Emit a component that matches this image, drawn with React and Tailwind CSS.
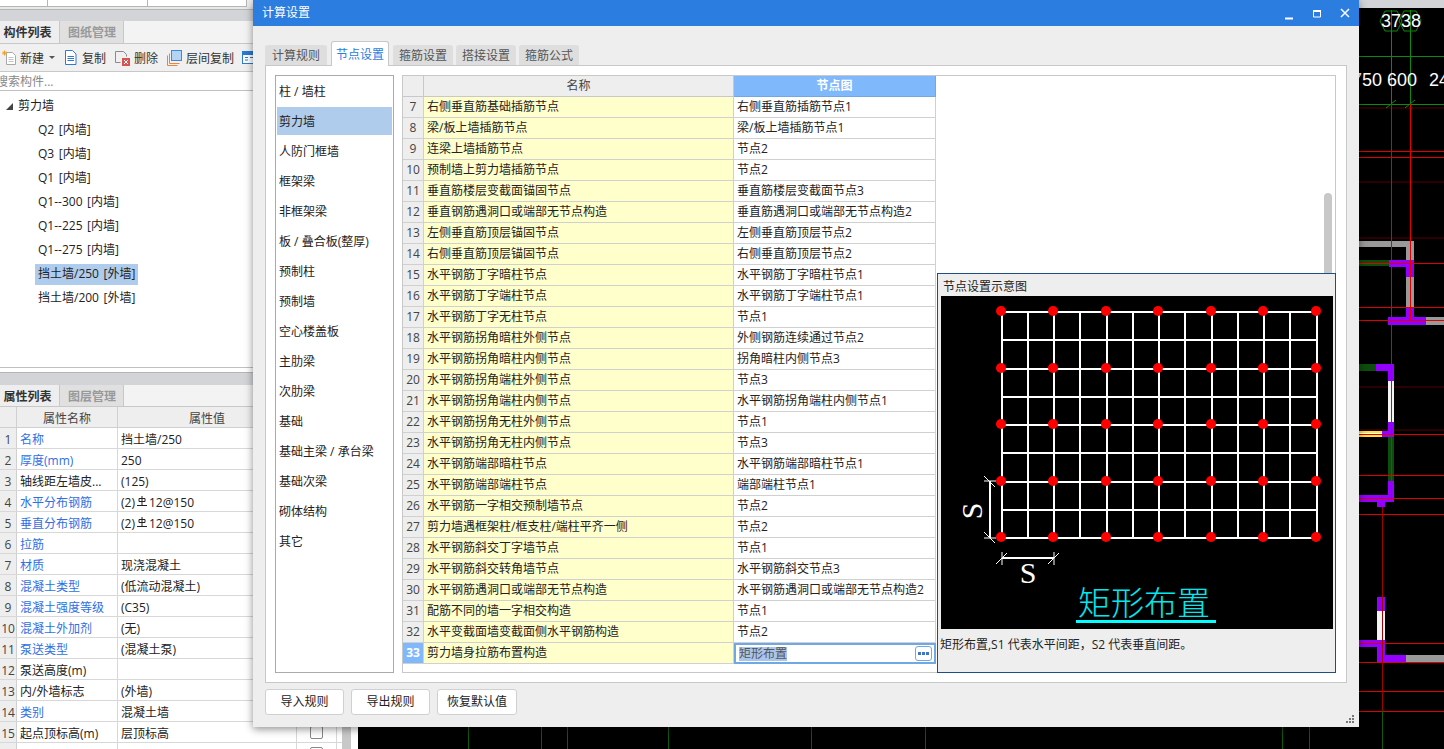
const treeItems = ['Q2 [内墙]', 'Q3 [内墙]', 'Q1 [内墙]', 'Q1--300 [内墙]', 'Q1--225 [内墙]', 'Q1--275 [内墙]', '挡土墙/250 [外墙]', '挡土墙/200 [外墙]'];

const props = [
  ['名称', '挡土墙/250', true],
  ['厚度(mm)', '250', true],
  ['轴线距左墙皮...', '(125)', false],
  ['水平分布钢筋', 'rebar', true],
  ['垂直分布钢筋', 'rebar', true],
  ['拉筋', '', true],
  ['材质', '现浇混凝土', true],
  ['混凝土类型', '(低流动混凝土)', true],
  ['混凝土强度等级', '(C35)', true],
  ['混凝土外加剂', '(无)', true],
  ['泵送类型', '(混凝土泵)', true],
  ['泵送高度(m)', '', false],
  ['内/外墙标志', '(外墙)', false],
  ['类别', '混凝土墙', true],
  ['起点顶标高(m)', '层顶标高', false],
  ['', '', false],
];

const categories = ['柱 / 墙柱', '剪力墙', '人防门框墙', '框架梁', '非框架梁', '板 / 叠合板(整厚)', '预制柱', '预制墙', '空心楼盖板', '主肋梁', '次肋梁', '基础', '基础主梁 / 承台梁', '基础次梁', '砌体结构', '其它'];

const nodes = [
  [7, '右侧垂直筋基础插筋节点', '右侧垂直筋插筋节点1'],
  [8, '梁/板上墙插筋节点', '梁/板上墙插筋节点1'],
  [9, '连梁上墙插筋节点', '节点2'],
  [10, '预制墙上剪力墙插筋节点', '节点2'],
  [11, '垂直筋楼层变截面锚固节点', '垂直筋楼层变截面节点3'],
  [12, '垂直钢筋遇洞口或端部无节点构造', '垂直筋遇洞口或端部无节点构造2'],
  [13, '左侧垂直筋顶层锚固节点', '左侧垂直筋顶层节点2'],
  [14, '右侧垂直筋顶层锚固节点', '右侧垂直筋顶层节点2'],
  [15, '水平钢筋丁字暗柱节点', '水平钢筋丁字暗柱节点1'],
  [16, '水平钢筋丁字端柱节点', '水平钢筋丁字端柱节点1'],
  [17, '水平钢筋丁字无柱节点', '节点1'],
  [18, '水平钢筋拐角暗柱外侧节点', '外侧钢筋连续通过节点2'],
  [19, '水平钢筋拐角暗柱内侧节点', '拐角暗柱内侧节点3'],
  [20, '水平钢筋拐角端柱外侧节点', '节点3'],
  [21, '水平钢筋拐角端柱内侧节点', '水平钢筋拐角端柱内侧节点1'],
  [22, '水平钢筋拐角无柱外侧节点', '节点1'],
  [23, '水平钢筋拐角无柱内侧节点', '节点3'],
  [24, '水平钢筋端部暗柱节点', '水平钢筋端部暗柱节点1'],
  [25, '水平钢筋端部端柱节点', '端部端柱节点1'],
  [26, '水平钢筋一字相交预制墙节点', '节点2'],
  [27, '剪力墙遇框架柱/框支柱/端柱平齐一侧', '节点2'],
  [28, '水平钢筋斜交丁字墙节点', '节点1'],
  [29, '水平钢筋斜交转角墙节点', '水平钢筋斜交节点3'],
  [30, '水平钢筋遇洞口或端部无节点构造', '水平钢筋遇洞口或端部无节点构造2'],
  [31, '配筋不同的墙一字相交构造', '节点1'],
  [32, '水平变截面墙变截面侧水平钢筋构造', '节点2'],
  [33, '剪力墙身拉筋布置构造', '矩形布置'],
];

// x, y, w, h, fill: wall pieces on the CAD canvas
const walls = [
  [1359, 241, 55, 6, '#999999'], [1406, 241, 8, 70, '#999999'], [1359, 260, 30, 6, '#0d4d0d'],
  [1389, 260, 25, 7, '#9400ff'], [1406, 267, 8, 10, '#9400ff'], [1406, 308, 8, 10, '#9400ff'],
  [1388, 317, 38, 8, '#9400ff'], [1426, 317, 18, 8, '#999999'],
  [1359, 364, 17, 7, '#0d4d0d'], [1376, 364, 18, 7, '#9400ff'], [1388, 364, 6, 17, '#9400ff'],
  [1388, 381, 6, 41, '#f4f4f4'], [1388, 422, 6, 15, '#9400ff'], [1359, 431, 23, 6, '#ffe23a'],
  [1382, 431, 12, 6, '#9400ff'], [1388, 437, 6, 44, '#0d4d0d'], [1388, 481, 6, 21, '#9400ff'],
  [1359, 495, 35, 7, '#9400ff'], [1377, 502, 8, 5, '#9400ff'],
  [1377, 597, 8, 14, '#9400ff'], [1377, 611, 8, 29, '#f4f4f4'], [1359, 640, 26, 7, '#9400ff'],
  [1377, 647, 8, 15, '#9400ff'], [1385, 655, 21, 7, '#9400ff'], [1406, 655, 38, 7, '#999999'],
];

const redLines = [151, 157, 263, 307, 320, 434, 475, 498, 514, 643, 662, 691, 711];
const darkLines = [108, 182, 238, 387, 430];
const bottomGreen = [468, 541, 567, 668, 811, 925, 1282, 1309];

const gridX = [1002, 1028, 1054, 1080, 1107, 1133, 1159, 1185, 1212, 1238, 1264, 1290, 1317];
const gridY = [312, 340, 369, 397, 425, 453, 482, 510, 538];
const dotX = [1001, 1053, 1106, 1158, 1211, 1263, 1316];
const dotY = [311, 368, 424, 481, 537];

function RebarGlyph() {
  return (
    <svg width="10" height="11" viewBox="0 0 10 11" className="mx-[2px] -mt-[4px] inline-block" fill="none" stroke="#222" strokeWidth="1">
      <path d="M5 0v9M2 2.500h6v3H2zM0 9.500h10" />
    </svg>
  );
}

function ToolbarIcons({ type }) {
  if (type === 'new') {
    return (
      <svg width="16" height="16" viewBox="0 0 16 16" fill="none">
        <path d="M4.500 2.500h6l3 3v9h-9z" fill="#fff" stroke="#a8a8a8" />
        <path d="M6.500 7.500h5M6.500 9.500h5M6.500 11.500h5" stroke="#c4c4c4" />
        <path d="M2.500 0.500v5M0 3h5M1 1.500l3 3M4 1.500l-3 3" stroke="#f59a23" />
      </svg>
    );
  }
  if (type === 'copy') {
    return (
      <svg width="13" height="15" viewBox="0 0 13 15" fill="none" stroke="#2b7bd0">
        <path d="M1.500 0.500h7l3.500 3.500v10.500h-10.500z" fill="#fff" />
        <path d="M3.500 6.500h6.500M3.500 8.500h6.500M3.500 10.500h6.500" />
      </svg>
    );
  }
  if (type === 'delete') {
    return (
      <svg width="15" height="16" viewBox="0 0 15 16" fill="none">
        <path d="M0.500 1.500h8l3 3v2M0.500 1.500v11h5" stroke="#8a8a8a" />
        <rect x="7" y="8" width="8" height="8" fill="#d9534f" />
        <path d="M9 10l4 4M13 10l-4 4" stroke="#fff" />
      </svg>
    );
  }
  if (type === 'floor') {
    return (
      <svg width="15" height="16" viewBox="0 0 15 16" fill="none">
        <path d="M0.500 5.500v10h10" stroke="#f0842c" />
        <path d="M2.500 3.500v10h10" stroke="#f0842c" />
        <rect x="4.500" y="0.500" width="10" height="10" fill="#b3d4f5" stroke="#3b8ade" />
      </svg>
    );
  }
  return (
    <svg width="15" height="16" viewBox="0 0 15 16" fill="none">
      <rect x="0.500" y="1.500" width="13" height="12" fill="#fff" stroke="#2b7bd0" />
      <rect x="1" y="2" width="12" height="3" fill="#2b7bd0" />
      <path d="M3 7.500h3M3 10h3M8 7.500h3" stroke="#2b7bd0" />
    </svg>
  );
}

function LeftPanel() {
  return (
    <div className="flex h-full w-[358px] shrink-0 flex-col bg-white">
      <div className="flex h-[7px] shrink-0 bg-[#eeeeee]">
        <div className="w-[48px] border-r border-b border-[#b5b5b5] bg-white" />
        <div className="w-[100px] border-r border-b border-[#b5b5b5] bg-white" />
        <div className="w-[99px] border-r border-b border-[#b5b5b5] bg-white" />
      </div>
      <div className="h-[3px] shrink-0 border-b border-[#b5b5b5] bg-[#e8e8e8]" />
      <div className="h-[11px] shrink-0 bg-[#d3d4d8]" />
      <div className="flex h-[23px] shrink-0 border-b border-[#c8c8c8] bg-[#f3f3f3]">
        <div className="flex w-[59px] items-center justify-center bg-[#eeeeee] pt-[2px] pr-[4px] font-bold text-[#333]">构件列表</div>
        <div className="flex w-[65px] items-center justify-center border-x border-[#c8c8c8] bg-[#e0e0e0] pt-[2px] pl-[1px] font-bold text-[#999]">图纸管理</div>
      </div>
      <div className="flex h-[28px] shrink-0 items-center overflow-hidden border-b border-[#c8c8c8] bg-[#f0f0f0] pl-[2px] text-[#333]">
        <ToolbarIcons type="new" />
        <span className="mt-[2px] ml-[2px]">新建</span>
        <span className="ml-[5px] h-0 w-0 border-x-[3px] border-t-[3px] border-x-transparent border-t-[#555]" />
        <span className="ml-[9px] flex items-center"><ToolbarIcons type="copy" /></span>
        <span className="mt-[2px] ml-[5px]">复制</span>
        <span className="ml-[9px] flex items-center"><ToolbarIcons type="delete" /></span>
        <span className="mt-[2px] ml-[4px]">删除</span>
        <span className="ml-[9px] flex items-center"><ToolbarIcons type="floor" /></span>
        <span className="mt-[2px] ml-[4px] whitespace-nowrap">层间复制</span>
        <span className="ml-[8px] flex shrink-0 items-center"><ToolbarIcons type="table" /></span>
      </div>
      <div className="flex h-[19px] shrink-0 items-center overflow-hidden border-b border-[#c0c0c0] pt-[2px] whitespace-nowrap text-[#888]">
        <span className="-ml-[4px]">搜索构件...</span>
      </div>
      <div className="flex h-[277px] shrink-0 flex-col border-b border-[#c0c0c0] pt-[3px]">
        <div className="flex h-[24px] shrink-0 items-center pl-[6px] text-[#222]">
          <span className="h-0 w-0 border-b-[7px] border-l-[7px] border-b-[#444] border-l-transparent" />
          <span className="ml-[5px]">剪力墙</span>
        </div>
        {treeItems.map((item, i) => (
          <div key={item} className="flex h-[24px] shrink-0 items-center pl-[35px] text-[#222]">
            <span className={`flex h-[21px] items-center px-[3px] [word-spacing:1.5px] ${i === 6 ? 'bg-[#b0ccec]' : ''}`}>{item}</span>
          </div>
        ))}
      </div>
      <div className="h-[4px] shrink-0 bg-white" />
      <div className="h-[13px] shrink-0 border-t border-[#b5b5b5] bg-[#d3d4d8]" />
      <div className="flex h-[22px] shrink-0 border-b border-[#c8c8c8] bg-[#f3f3f3]">
        <div className="flex w-[59px] items-center justify-center bg-[#eeeeee] pt-[2px] pr-[4px] font-bold text-[#333]">属性列表</div>
        <div className="flex w-[65px] items-center justify-center border-x border-[#c8c8c8] bg-[#e0e0e0] pt-[2px] pl-[1px] font-bold text-[#999]">图层管理</div>
      </div>
      <div className="flex min-h-0 flex-1 overflow-hidden">
        <div className="w-[342px] shrink-0">
          <div className="grid h-[21px] grid-cols-[17px_101px_179px_40px] border-b border-[#d0d0d0] bg-[#eeeeee] text-[#444]">
            <div className="border-r border-[#d0d0d0]" />
            <div className="flex items-center justify-center border-r border-[#d0d0d0] pt-[4px]">属性名称</div>
            <div className="flex items-center justify-center border-r border-[#d0d0d0] pt-[4px]">属性值</div>
            <div className="border-r border-[#d0d0d0]" />
          </div>
          {props.map(([name, value, blue], i) => (
            <div key={i} className="grid h-[21px] grid-cols-[17px_101px_179px_40px] border-b border-[#d8d8d8] text-[#222]">
              <div className="flex items-center justify-center border-r border-[#d0d0d0] bg-[#eeeeee] pt-[4px] text-[#444]">{name ? i + 1 : ''}</div>
              <div className={`flex items-center border-r border-[#d8d8d8] pt-[4px] pl-[3px] whitespace-nowrap ${blue ? 'text-[#2f6fe6]' : ''}`}>{name}</div>
              <div className="flex items-center border-r border-[#d8d8d8] pt-[4px] pl-[3px]">
                {value === 'rebar' ? <>(2)<RebarGlyph />12@150</> : value}
              </div>
              <div className="flex items-center justify-center border-r border-[#d8d8d8]">
                {i >= 14 && <span className="h-[13px] w-[13px] rounded-[2px] border border-[#888] bg-white" />}
              </div>
            </div>
          ))}
        </div>
        <div className="w-[9px] shrink-0 bg-[#c8c8c8]" />
      </div>
    </div>
  );
}

function CadCanvas() {
  return (
    <div className="flex h-full min-w-0 flex-1 flex-col bg-black">
      <div className="h-[8px] shrink-0 bg-[#d3d4d8]" />
      <svg viewBox="358 8 1086 741" className="block h-[741px] w-[1086px]">
        {darkLines.map((y) => <line key={y} x1="358" x2="1444" y1={y} y2={y} stroke="#5a0000" />)}
        <line x1="1359" x2="1444" y1="56.500" y2="56.500" stroke="#0d8a0d" />
        <line x1="1359" x2="1444" y1="104.500" y2="104.500" stroke="#0d8a0d" />
        {walls.map(([x, y, w, h, fill], i) => <rect key={i} x={x} y={y} width={w} height={h} fill={fill} />)}
        <rect x="1359" y="433" width="23" height="2" fill="#ffffff" />
        {redLines.map((y) => <line key={y} x1="358" x2="1444" y1={y + 0.5} y2={y + 0.5} stroke="#e00000" />)}
        <line x1="1391.500" x2="1391.500" y1="10" y2="104" stroke="#0d8a0d" />
        <line x1="1410.500" x2="1410.500" y1="10" y2="104" stroke="#0d8a0d" />
        <line x1="1391.500" x2="1391.500" y1="104" y2="498" stroke="#e00000" />
        <line x1="1410.500" x2="1410.500" y1="104" y2="320" stroke="#e00000" />
        <line x1="1382.500" x2="1382.500" y1="507" y2="711" stroke="#a00000" />
        <line x1="1382.500" x2="1382.500" y1="711" y2="749" stroke="#0d5a0d" />
        {bottomGreen.map((x) => <line key={x} x1={x + 0.5} x2={x + 0.5} y1="700" y2="749" stroke="#0d5a0d" />)}
        <path d="M1386 108l10-8M1405 108l10-8" stroke="#0d8a0d" />
        <path d="M1385 11h12l5 10-5 10h-12l-5-10zM1404 11h12l5 10-5 10h-12l-5-10z" fill="none" stroke="#0d8a0d" />
        <text x="1401" y="27" textAnchor="middle" fill="#fff" fontSize="18" fontFamily="Liberation Sans, sans-serif">3738</text>
        <text x="1382" y="86" textAnchor="end" fill="#fff" fontSize="18" fontFamily="Liberation Sans, sans-serif">750</text>
        <text x="1387" y="86" fill="#fff" fontSize="18" fontFamily="Liberation Sans, sans-serif">600</text>
        <text x="1429" y="86" fill="#fff" fontSize="18" fontFamily="Liberation Sans, sans-serif">24</text>
      </svg>
    </div>
  );
}

function NodeDiagram() {
  return (
    <svg viewBox="941 296 392 333" className="block h-[333px] w-[392px] bg-black">
      {gridX.map((x) => <line key={x} x1={x} x2={x} y1="311" y2="539" stroke="#fff" strokeWidth="2" />)}
      {gridY.map((y) => <line key={y} x1="1002" x2="1317" y1={y} y2={y} stroke="#fff" strokeWidth="2" />)}
      {dotY.map((y) => dotX.map((x) => <circle key={`${x}-${y}`} cx={x} cy={y} r="5" fill="#ff0000" />))}
      <g stroke="#fff">
        <line x1="990" x2="990" y1="481" y2="538" strokeWidth="2" />
        <path d="M984 476l11 11M984 532l11 11M996 481h-12M996 538h-12" strokeWidth="1" />
        <line x1="1002" x2="1054" y1="558" y2="558" strokeWidth="2" />
        <path d="M996 564l11-11M1048 564l11-11M1002 552v13M1054 552v13" strokeWidth="1" />
      </g>
      <text x="1028" y="583" textAnchor="middle" fill="#fff" fontSize="30" fontFamily="Liberation Serif, serif">S</text>
      <text transform="translate(982 511) rotate(-90)" textAnchor="middle" fill="#fff" fontSize="30" fontFamily="Liberation Serif, serif">S</text>
      <text x="1144" y="615" textAnchor="middle" fill="#00e8f0" fontSize="33" fontWeight="200" fontFamily="Noto Sans CJK SC, sans-serif">矩形布置</text>
      <rect x="1076" y="620" width="140" height="3" fill="#00ffff" />
    </svg>
  );
}

function NodeTable() {
  return (
    <div className="relative min-w-0 flex-1 border border-[#c8c8c8]">
      <div className="grid h-[21px] w-fit grid-cols-[21px_310px_202px] text-[#444]">
        <div className="border-r border-b border-[#c8c8c8] bg-[#eeeeee]" />
        <div className="flex items-center justify-center border-r border-b border-[#c8c8c8] bg-[#eeeeee]">名称</div>
        <div className="flex items-center justify-center border-r border-b border-[#6fa8e4] bg-[#7fb8fb] font-bold text-white">节点图</div>
      </div>
      {nodes.map(([no, name, value]) => {
        const active = no === 33;
        return (
          <div key={no} className="grid h-[21px] w-fit grid-cols-[21px_310px_202px] text-[#222]">
            <div className={`flex items-center justify-center border-r border-b border-[#d0d0d0] ${active ? 'bg-[#7fb8fb] font-bold text-white' : 'bg-[#eeeeee] text-[#444]'}`}>{no}</div>
            <div className="flex items-center border-r border-b border-[#d0d0d0] bg-[#ffffcc] pl-[3px] whitespace-nowrap">{name}</div>
            {active ? (
              <div className="flex items-center justify-between border-2 border-[#6fa8e4] bg-white pr-[2px] pl-[3px]">
                <span className="flex h-[14px] items-center bg-[#a9c5ee] text-[#555]">{value}</span>
                <span className="flex h-[15px] w-[17px] items-center justify-center rounded-[3px] border border-[#6fa8e4]">
                  <svg width="11" height="3" viewBox="0 0 11 3" fill="#3b78c4">
                    <path d="M0 0h3v3H0zM4 0h3v3H4zM8 0h3v3H8z" />
                  </svg>
                </span>
              </div>
            ) : (
              <div className="flex items-center border-r border-b border-[#d0d0d0] pl-[3px] whitespace-nowrap">{value}</div>
            )}
          </div>
        );
      })}
      <div className="absolute top-[117px] right-[3px] h-[80px] w-[8px] rounded-t-[4px] bg-[#c8c8c8]" />
      <div className="absolute top-[197px] right-[-1px] bottom-[-1px] left-[534px] border border-[#1f4e86] bg-[#eeeeee] pt-[3px] pl-[3px] text-[#222]">
        <div className="flex h-[19px] items-center pl-[2px]">节点设置示意图</div>
        <NodeDiagram />
        <div className="mt-[7px] -ml-[1px] flex h-[18px] items-center whitespace-nowrap">矩形布置,S1 代表水平间距，S2 代表垂直间距。</div>
      </div>
    </div>
  );
}

function WindowButtons() {
  return (
    <div className="flex items-center gap-[12px]">
      <svg width="16" height="16" viewBox="0 0 16 16" fill="none" stroke="#fff">
        <path d="M4 13.500h8" strokeWidth="2" />
      </svg>
      <svg width="16" height="16" viewBox="0 0 16 16" fill="none" stroke="#fff">
        <path d="M4.500 6h7v6h-7z" strokeWidth="1" />
        <path d="M4 6h8" strokeWidth="2" />
      </svg>
      <svg width="16" height="16" viewBox="0 0 16 16" fill="none" stroke="#fff" strokeWidth="1.500">
        <path d="M4 4l8 8M12 4l-8 8" />
      </svg>
    </div>
  );
}

function Dialog() {
  // tab widths and gaps differ a little per label in the original
  const tabs = [
    ['计算规则', 'w-[62px] mr-[4px]'],
    ['节点设置', 'w-[58px] mr-[4px]'],
    ['箍筋设置', 'w-[60px] mr-[3px]'],
    ['搭接设置', 'w-[60px] mr-[3px]'],
    ['箍筋公式', 'w-[60px]'],
  ];
  return (
    <div className="absolute top-0 left-[253px] flex h-[727px] w-[1106px] flex-col bg-[#eeeeee] shadow-[0_2px_8px_rgba(0,0,0,0.45)]">
      <div className="flex h-[26px] shrink-0 items-center justify-between bg-[#2c7de0] pr-[6px] pl-[9px] text-white">
        <span>计算设置</span>
        <WindowButtons />
      </div>
      <div className="flex h-[39px] shrink-0 items-end pl-[12px]">
        {tabs.map(([tab, size]) => {
          const on = tab === '节点设置';
          return (
            <div
              key={tab}
              className={`flex items-center justify-center rounded-t-[3px] pt-[2px] ${size} ${
                on
                  ? 'relative z-10 -mb-px h-[25px] border border-b-0 border-[#c8c8c8] bg-white text-[#2c7de0]'
                  : 'h-[20px] bg-[#dedede] text-[#555]'
              }`}
            >
              {tab}
            </div>
          );
        })}
      </div>
      <div className="mx-[12px] flex h-[618px] shrink-0 gap-[8px] border border-[#c8c8c8] bg-white py-[9px] pr-[10px] pl-[9px]">
        <div className="w-[119px] shrink-0 border border-[#aaaaaa] p-[1px] text-[#222]">
          {categories.map((c, i) => (
            <div key={c} className={`mb-[2px] flex h-[28px] items-center pt-[2px] pl-[2px] whitespace-nowrap ${i === 1 ? 'bg-[#b0ccec]' : ''}`}>{c}</div>
          ))}
        </div>
        <NodeTable />
      </div>
      <div className="flex gap-[7px] pt-[6px] pl-[12px] text-[#222]">
        <button type="button" className="flex h-[26px] w-[79px] items-center justify-center rounded-[3px] border border-[#d0d0d0] bg-white">导入规则</button>
        <button type="button" className="flex h-[26px] w-[79px] items-center justify-center rounded-[3px] border border-[#d0d0d0] bg-white">导出规则</button>
        <button type="button" className="flex h-[26px] w-[80px] items-center justify-center rounded-[3px] border border-[#d0d0d0] bg-white">恢复默认值</button>
      </div>
      <svg width="9" height="9" viewBox="0 0 9 9" className="absolute right-[4px] bottom-[3px]" fill="#777">
        <path d="M6 0h2v2H6zM3 3h2v2H3zM6 3h2v2H6zM0 6h2v2H0zM3 6h2v2H3zM6 6h2v2H6z" />
      </svg>
    </div>
  );
}

export default function App() {
  return (
    <div className="relative flex h-[749px] w-[1444px] overflow-hidden bg-black font-['Open_Sans','Noto_Sans_CJK_SC',sans-serif] text-[12px] leading-none">
      <LeftPanel />
      <CadCanvas />
      <Dialog />
    </div>
  );
}
